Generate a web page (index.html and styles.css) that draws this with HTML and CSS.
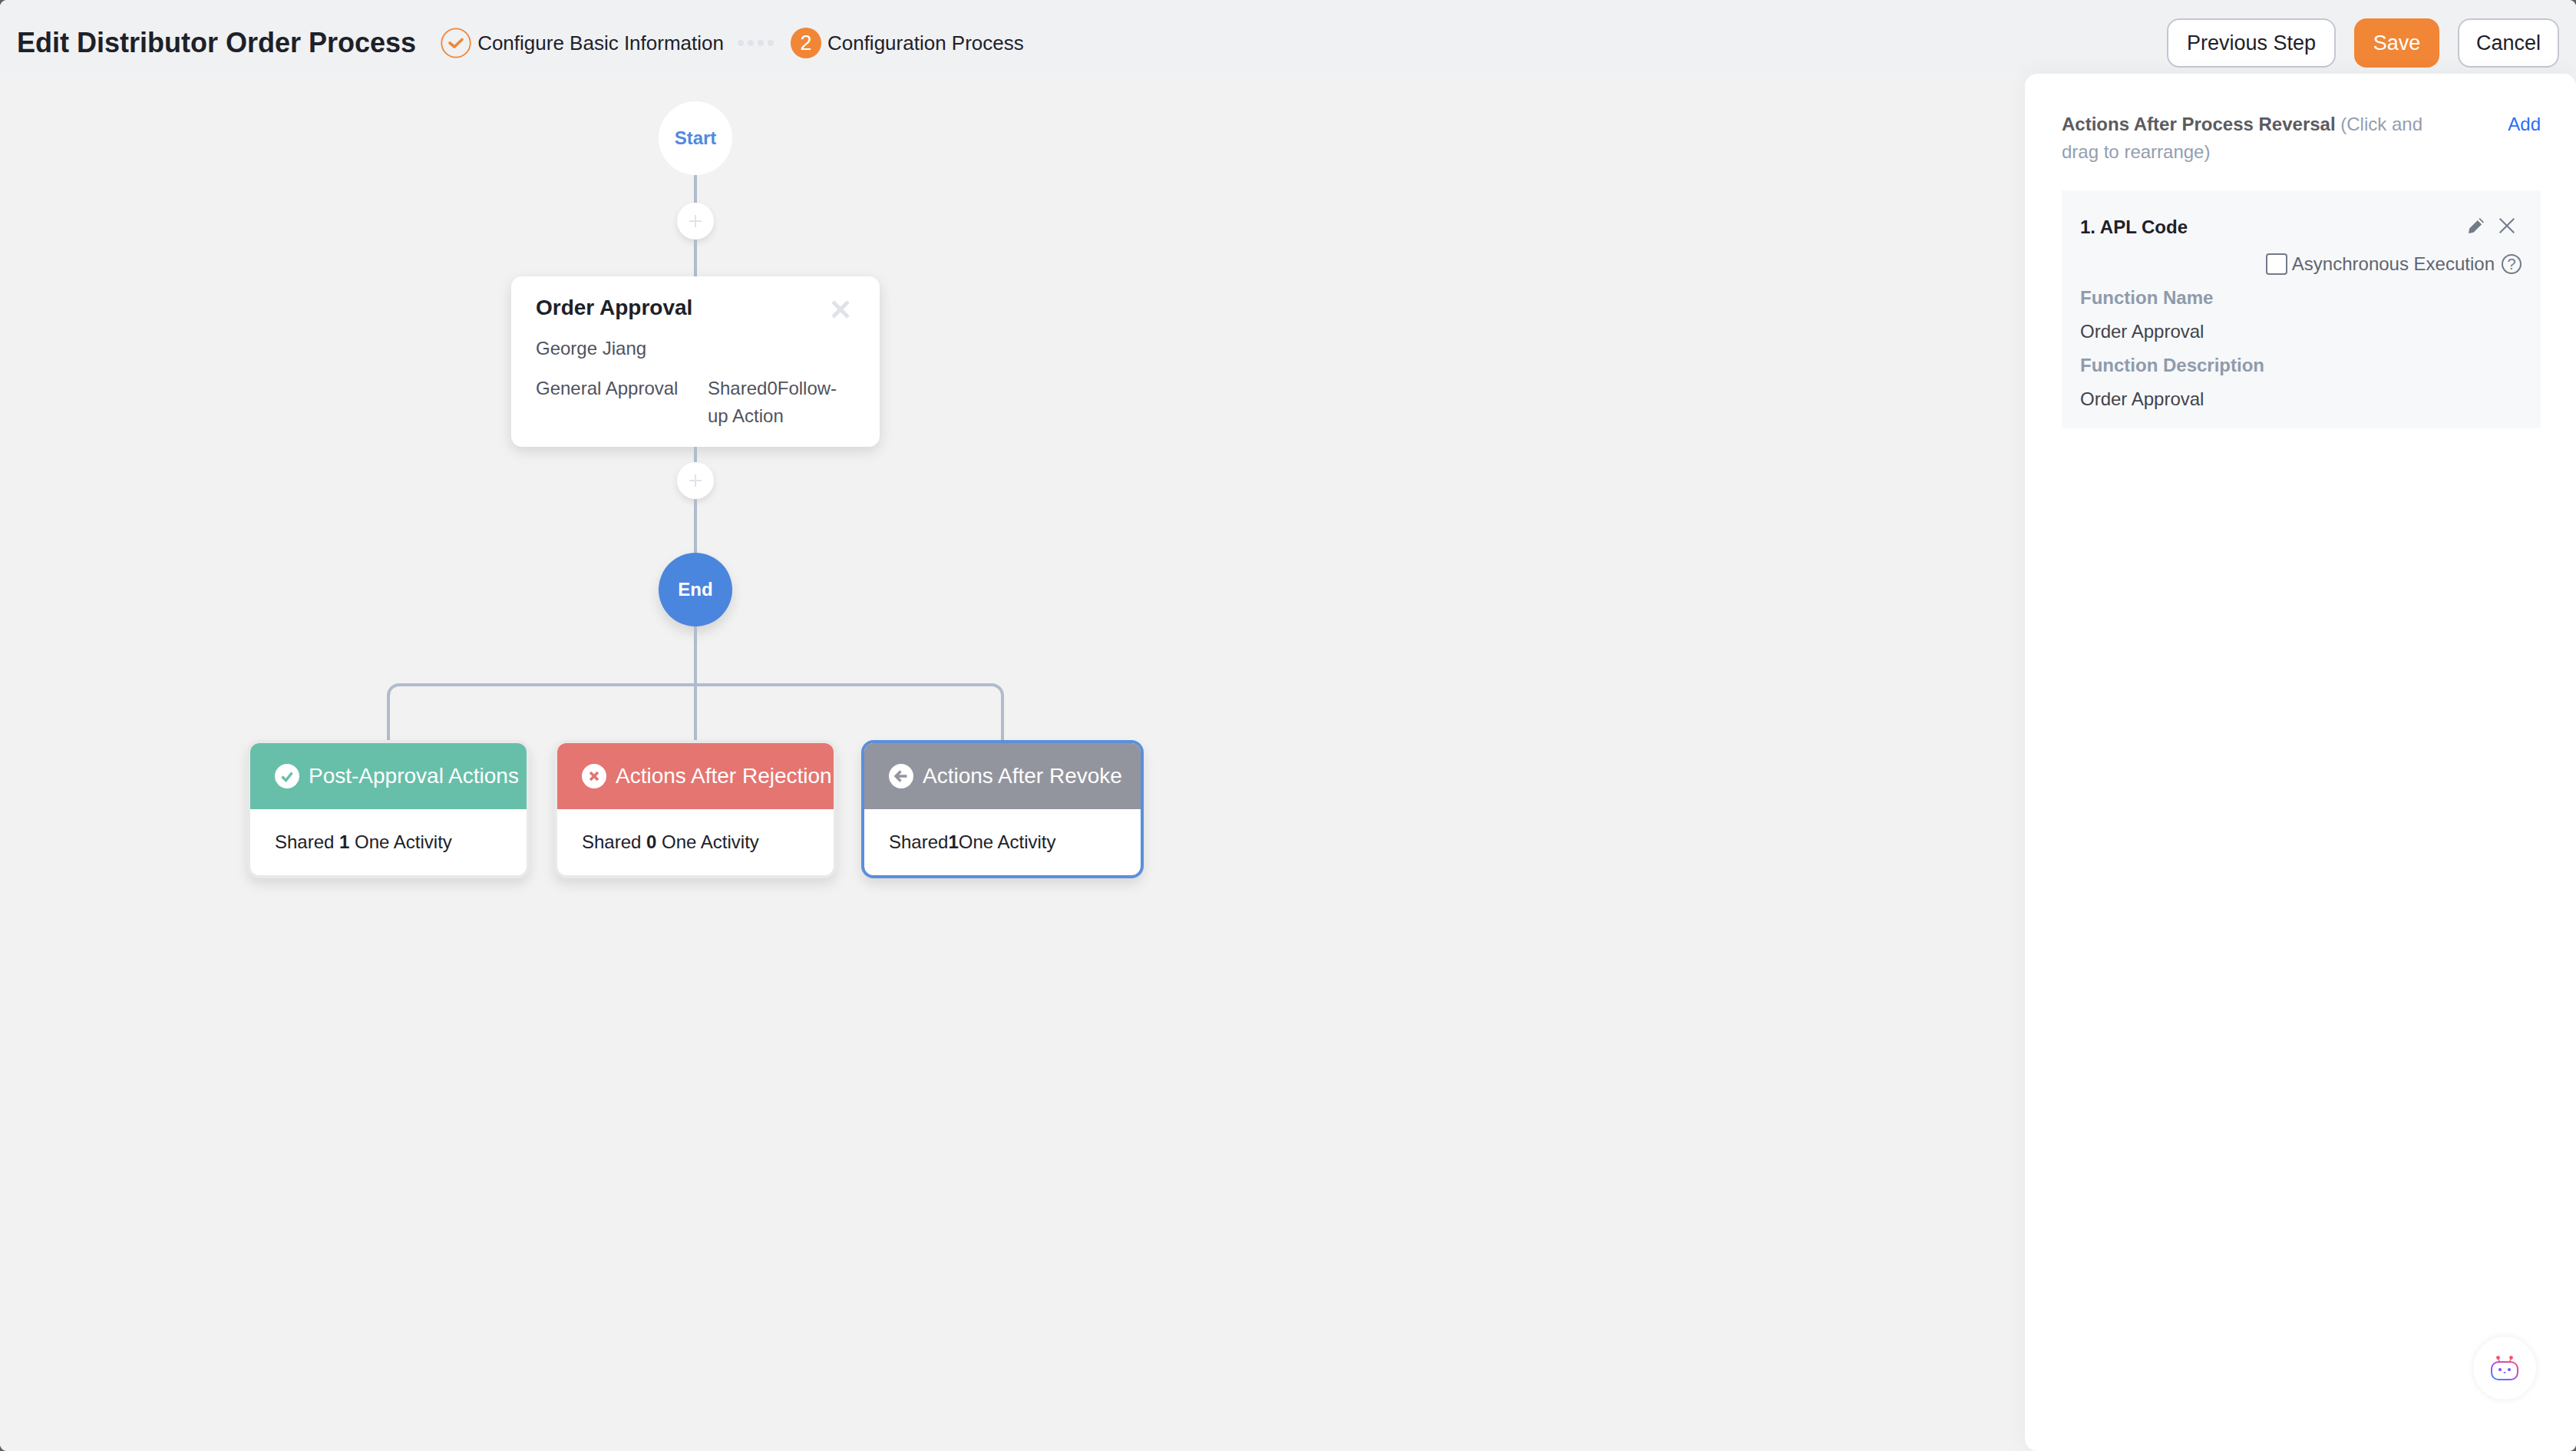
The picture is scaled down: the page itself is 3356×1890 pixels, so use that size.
FILE: index.html
```html
<!DOCTYPE html>
<html lang="en">
<head>
<meta charset="utf-8">
<title>Edit Distributor Order Process</title>
<link rel="stylesheet" href="styles.css">
</head>
<body>
<div class="app">
  <header class="topbar">
    <h1 class="page-title">Edit Distributor Order Process</h1>
    <ol class="steps">
      <li class="step">
        <svg class="step-icon" viewBox="0 0 40 40"><circle cx="20" cy="20" r="18.7" fill="none" stroke="#f18636" stroke-width="1.800"/><path d="M12 20l6 5 10-9.500" fill="none" stroke="#f18636" stroke-width="3.600" stroke-linecap="round" stroke-linejoin="round"/></svg>
        <span>Configure Basic Information</span>
      </li>
      <li class="step-dots"><i></i><i></i><i></i><i></i></li>
      <li class="step">
        <span class="step-num">2</span>
        <span>Configuration Process</span>
      </li>
    </ol>
    <div class="actions">
      <button class="btn btn-prev">Previous Step</button>
      <button class="btn btn-primary">Save</button>
      <button class="btn btn-cancel">Cancel</button>
    </div>
  </header>
  <main class="workspace">
    <section class="canvas">
      <div class="flow">
        <div class="node node-start">Start</div>
        <div class="line line-36"></div>
        <div class="plus"><svg viewBox="0 0 16 16"><path d="M8 0v16M0 8h16" stroke="#e0e4ea" stroke-width="2" fill="none"/></svg></div>
        <div class="line line-48"></div>
        <article class="approval">
          <div class="approval-head">
            <h2>Order Approval</h2>
            <svg class="approval-close" viewBox="0 0 26 26"><path d="M3 3l20 20M23 3L3 23" stroke="#dfe3e8" stroke-width="5" fill="none"/></svg>
          </div>
          <p class="approval-owner">George Jiang</p>
          <div class="approval-meta">
            <span>General Approval</span>
            <span>Shared0Follow-up Action</span>
          </div>
        </article>
        <div class="line line-20"></div>
        <div class="plus"><svg viewBox="0 0 16 16"><path d="M8 0v16M0 8h16" stroke="#e0e4ea" stroke-width="2" fill="none"/></svg></div>
        <div class="line line-70"></div>
        <div class="node node-end">End</div>
        <div class="line line-74"></div>
        <div class="branch"><div class="branch-mid"></div></div>
        <div class="outcomes">
          <article class="outcome">
            <div class="outcome-head head-green">
              <svg class="outcome-icon" viewBox="0 0 32 32"><circle cx="16" cy="16" r="16" fill="#fff"/><path d="M9.500 16.500l5 5 8-10" fill="none" stroke="#67bfa9" stroke-width="3.400"/></svg>
              <span>Post-Approval Actions</span>
            </div>
            <div class="outcome-body">Shared <b>1</b> One Activity</div>
          </article>
          <article class="outcome">
            <div class="outcome-head head-red">
              <svg class="outcome-icon" viewBox="0 0 32 32"><circle cx="16" cy="16" r="16" fill="#fff"/><path d="M11 11l10 10M21 11L11 21" fill="none" stroke="#e57571" stroke-width="3.600"/></svg>
              <span>Actions After Rejection</span>
            </div>
            <div class="outcome-body">Shared <b>0</b> One Activity</div>
          </article>
          <article class="outcome outcome-active">
            <div class="outcome-head head-gray">
              <svg class="outcome-icon" viewBox="0 0 32 32"><circle cx="16" cy="16" r="16" fill="#fff"/><path d="M8.500 16h15M15.500 9.500L9 16l6.500 6.500" fill="none" stroke="#93959e" stroke-width="3.400"/></svg>
              <span>Actions After Revoke</span>
            </div>
            <div class="outcome-body">Shared<b>1</b>One Activity</div>
          </article>
        </div>
      </div>
    </section>
    <aside class="panel">
      <div class="panel-head">
        <p class="panel-title"><b>Actions After Process Reversal</b> (Click and drag to rearrange)</p>
        <a class="panel-add">Add</a>
      </div>
      <div class="apl-card">
        <div class="apl-top">
          <h3>1. APL Code</h3>
          <div class="apl-tools">
            <svg viewBox="0 0 20 20"><path d="M0 20l1.200-6.500L11.800 2.900l5.300 5.300L6.500 18.800zM13.500 1.200L14.700 0 20 5.300l-1.200 1.200z" fill="#737b89"/></svg>
            <svg viewBox="0 0 20 20"><path d="M.7.7l18.600 18.600M19.300.7L.7 19.300" stroke="#737b89" stroke-width="2" fill="none"/></svg>
          </div>
        </div>
        <div class="apl-async">
          <span class="checkbox"></span>
          <span>Asynchronous Execution</span>
          <span class="help">?</span>
        </div>
        <div class="apl-label">Function Name</div>
        <div class="apl-value">Order Approval</div>
        <div class="apl-label">Function Description</div>
        <div class="apl-value">Order Approval</div>
      </div>
      <div class="bot">
        <svg viewBox="0 0 36 32">
          <defs><linearGradient id="botg" x1="0" y1="1" x2="1" y2="0"><stop offset="0" stop-color="#3f8cff"/><stop offset=".45" stop-color="#a44df0"/><stop offset="1" stop-color="#f4546c"/></linearGradient></defs>
          <rect x="1" y="8" width="34" height="23" rx="9" fill="none" stroke="url(#botg)" stroke-width="2"/>
          <path d="M11 7L9.500 3M25 7l1.500-4" stroke="#ec5a86" stroke-width="1.500" fill="none"/>
          <circle cx="9.500" cy="2.500" r="2.400" fill="#f0586e"/><circle cx="26.500" cy="2.500" r="2.400" fill="#f0586e"/>
          <circle cx="12" cy="18" r="2" fill="#7a4df5"/><circle cx="24" cy="18" r="2" fill="#7a4df5"/>
          <path d="M16 21h4l-2 2z" fill="#7a4df5"/>
        </svg>
      </div>
    </aside>
  </main>
</div>
</body>
</html>
```
FILE: styles.css
```css
* { box-sizing: border-box; }
html, body { margin: 0; padding: 0; }
html { background: #5f6168; }
body { font-family: "Liberation Sans", Arial, sans-serif; color: #1d2129; background: #5f6168; }
.app { width: 3356px; height: 1890px; display: flex; flex-direction: column; overflow: hidden; border-radius: 9px; background: #f2f2f2; }

.topbar { height: 96px; flex: none; display: flex; align-items: center; padding: 16px 22px 0; background: #f0f1f3; }
.page-title { margin: 0 32px 0 0; font-size: 36px; line-height: 44px; font-weight: 700; color: #1d2129; white-space: nowrap; }
.steps { display: flex; align-items: center; list-style: none; margin: 0; padding: 0; font-size: 26px; color: #1d2129; }
.step { display: flex; align-items: center; gap: 8px; white-space: nowrap; }
.step-icon { width: 40px; height: 40px; display: block; }
.step-num { width: 40px; height: 40px; border-radius: 50%; background: #f18636; color: #fff; display: flex; align-items: center; justify-content: center; font-size: 27px; }
.step-dots { display: flex; gap: 5px; margin: 0 22px 0 18px; }
.step-dots i { width: 8px; height: 8px; border-radius: 50%; background: #e0e3ea; }
.actions { margin-left: auto; display: flex; gap: 24px; }
.btn { height: 64px; border-radius: 16px; border: 2px solid #c4c7d2; background: #fff; color: #1d2129; font: 27px "Liberation Sans", Arial, sans-serif; padding: 0; }
.btn-prev { width: 220px; }
.btn-primary { width: 111px; background: #f18636; border-color: #f18636; color: #fff; }
.btn-cancel { width: 132px; }

.workspace { flex: 1; display: flex; min-height: 0; }
.canvas { flex: 1; background: #f2f2f2; padding: 36px 0 0 322px; }
.flow { width: 1168px; display: flex; flex-direction: column; align-items: center; }
.node { width: 96px; height: 96px; flex: none; border-radius: 50%; display: flex; align-items: center; justify-content: center; font-size: 24px; font-weight: 700; }
.node-start { background: #fff; color: #4f8ade; }
.node-end { background: #4a86dd; color: #fff; box-shadow: 0 8px 16px rgba(0,0,0,.12); }
.line { width: 4px; flex: none; background: #b0bccb; }
.line-36 { height: 36px; }
.line-48 { height: 48px; }
.line-20 { height: 20px; }
.line-70 { height: 70px; }
.line-74 { height: 74px; }
.plus { width: 48px; height: 48px; flex: none; border-radius: 50%; background: #fff; display: flex; align-items: center; justify-content: center; box-shadow: 0 4px 10px rgba(0,0,0,.1); }
.plus svg { width: 16px; height: 16px; }

.approval { width: 480px; height: 222px; flex: none; background: #fff; border-radius: 14px; padding: 23px 32px 0; box-shadow: 0 6px 18px rgba(0,0,0,.12); }
.approval-head { display: flex; justify-content: space-between; align-items: flex-start; }
.approval-head h2 { margin: 0; font-size: 28px; line-height: 36px; font-weight: 700; color: #1d2129; }
.approval-close { width: 26px; height: 26px; margin: 7px 6px 0 0; }
.approval-owner { margin: 17px 0 0; font-size: 24px; line-height: 36px; color: #50535e; }
.approval-meta { display: grid; grid-template-columns: 224px 192px; margin-top: 16px; font-size: 24px; line-height: 36px; color: #50535e; }

.branch { width: 804px; height: 74px; flex: none; border: 4px solid #b0bccb; border-bottom: 0; border-radius: 16px 16px 0 0; display: flex; justify-content: center; }
.branch-mid { width: 4px; background: #b0bccb; }
.outcomes { display: flex; gap: 32px; }
.outcome { width: 368px; height: 180px; flex: none; border: 4px solid #e9e9ea; border-radius: 16px; overflow: hidden; background: #fff; box-shadow: 0 8px 16px rgba(0,0,0,.1); }
.outcome-active { border-color: #5a8fdc; }
.outcome-head { height: 86px; display: flex; align-items: center; gap: 12px; padding-left: 32px; color: #fff; font-size: 28px; white-space: nowrap; }
.outcome-icon { width: 32px; height: 32px; flex: none; filter: blur(.4px); }
.head-green { background: #67bfa9; }
.head-red { background: #e57571; }
.head-gray { background: #93959e; }
.outcome-body { height: 86px; line-height: 86px; padding-left: 32px; font-size: 24px; color: #1d2129; }

.panel { width: 718px; flex: none; background: #fff; border-radius: 16px 16px 0 16px; padding: 48px 46px 0 48px; position: relative; box-shadow: 0 0 30px rgba(0,0,0,.05); }
.panel-head { display: flex; justify-content: space-between; align-items: flex-start; }
.panel-title { margin: 0; width: 500px; font-size: 24px; line-height: 36px; color: #939eaf; }
.panel-title b { color: #5b5b5f; }
.panel-add { font-size: 24px; line-height: 36px; color: #2b6ef5; }
.apl-card { margin-top: 32px; height: 310px; background: #f7f8fa; padding: 30px 25px 0 24px; }
.apl-top { display: flex; justify-content: space-between; align-items: center; height: 36px; }
.apl-top h3 { margin: 0; font-size: 24px; font-weight: 700; color: #1d2129; }
.apl-tools { display: flex; gap: 20px; margin: -4px 9px 0 0; }
.apl-tools svg { width: 20px; height: 20px; display: block; }
.apl-async { display: flex; justify-content: flex-end; align-items: center; height: 36px; margin: 12px 0 4px; font-size: 24px; color: #5f6570; }
.checkbox { width: 28px; height: 28px; border: 2px solid #737b89; border-radius: 4px; background: #fff; margin-right: 6px; }
.help { width: 26px; height: 26px; margin-left: 9px; border: 2px solid #737b89; border-radius: 50%; display: flex; align-items: center; justify-content: center; font-size: 20px; color: #737b89; }
.apl-label { font-size: 24px; line-height: 44px; font-weight: 700; color: #8f9bab; }
.apl-value { font-size: 24px; line-height: 44px; color: #3f444d; }
.bot { position: absolute; left: 584px; top: 1645px; width: 82px; height: 82px; border-radius: 50%; background: #fff; box-shadow: 0 0 10px rgba(0,0,0,.08); display: flex; align-items: center; justify-content: center; }
.bot svg { width: 36px; height: 32px; }
```
